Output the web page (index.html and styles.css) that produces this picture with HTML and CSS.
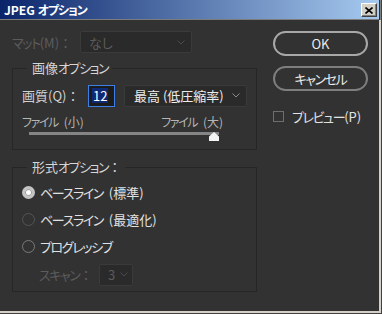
FILE: index.html
```html
<!DOCTYPE html>
<html lang="ja">
<head>
<meta charset="utf-8">
<title>JPEG オプション</title>
<link rel="stylesheet" href="styles.css">
</head>
<body>
<div class="window">
  <div class="titlebar">
    <span class="title">JPEG <span class="tk">オプション</span></span>
    <span class="close"><svg width="8" height="7" viewBox="0 0 8 7"><path d="M0.5 0.5L7.5 6.5M7.5 0.5L0.5 6.5" stroke="#000" stroke-width="1.6" fill="none"/></svg></span>
  </div>
  <div class="main">
    <div class="leftcol">
      <div class="matte-row">
        <span class="lbl disabled matte-lbl"><span class="k">マット</span>(M)<span class="colon">：</span></span>
        <div class="select matte-select disabled">
          <span>なし</span>
          <svg class="chev" width="8" height="5" viewBox="0 0 8 5"><path d="M0.5 0.5L4 4L7.5 0.5" stroke="#4a4a4a" fill="none"/></svg>
        </div>
      </div>
      <fieldset class="group g1">
        <legend>画像<span class="k">オプション</span></legend>
        <div class="quality-row">
          <span class="lbl q-lbl">画質(Q)<span class="colon">：</span></span>
          <div class="num-input"><span class="sel">12</span></div>
          <div class="select q-select">
            <span>最高 (低圧縮率)</span>
            <svg class="chev" width="8" height="5" viewBox="0 0 8 5"><path d="M0.5 0.5L4 4L7.5 0.5" stroke="#8a8a8a" fill="none"/></svg>
          </div>
        </div>
        <div class="size-row">
          <span><span class="k ks">ファイル</span> (小)</span>
          <span><span class="k ks">ファイル</span> (大)</span>
        </div>
        <div class="slider">
          <div class="track"></div>
          <svg class="thumb" width="10" height="9" viewBox="0 0 10 9"><path d="M5 0L10 4.5V9H0V4.5Z" fill="#f4f4f4"/></svg>
        </div>
      </fieldset>
      <fieldset class="group g2">
        <legend>形式<span class="k">オプション</span><span class="colon">：</span></legend>
        <div class="radio-row"><span class="radio on"></span><span><span class="k ks">ベースライン</span> (標準)</span></div>
        <div class="radio-row"><span class="radio dim"></span><span><span class="k ks">ベースライン</span> (最適化)</span></div>
        <div class="radio-row"><span class="radio"></span><span class="k">プログレッシブ</span></div>
        <div class="scan-row">
          <span class="disabled scan-lbl"><span class="k">スキャン</span><span class="colon">：</span></span>
          <div class="select scan-select disabled">
            <span>3</span>
            <svg class="chev" width="8" height="5" viewBox="0 0 8 5"><path d="M0.5 0.5L4 4L7.5 0.5" stroke="#4a4a4a" fill="none"/></svg>
          </div>
        </div>
      </fieldset>
    </div>
    <div class="rightcol">
      <button class="btn ok">OK</button>
      <button class="btn cancel"><span class="k">キャンセル</span></button>
      <label class="check-row"><span class="checkbox"></span><span><span class="k">プレビュー</span>(P)</span></label>
    </div>
  </div>
</div>
</body>
</html>
```

FILE: styles.css
```css
* { box-sizing: border-box; }
html, body { margin: 0; padding: 0; background: #323232; }
body {
  font-family: "Noto Sans CJK JP", "Noto Sans", sans-serif;
  font-size: 13px;
  font-feature-settings: "palt";
  color: #d2d2d2;
}
.k { letter-spacing: -1.4px; }
.ks { margin-right: 3px; }
.tk { letter-spacing: -1px; }
.colon { font-feature-settings: normal; }
.window {
  width: 382px;
  height: 314px;
  display: flex;
  flex-direction: column;
  background: #323232;
  border-right: 1px solid #404040;
  border-bottom: 1px solid #404040;
  box-shadow: inset -1px -1px 0 #808080;
}
.titlebar {
  height: 20px;
  flex: none;
  display: flex;
  align-items: center;
  justify-content: space-between;
  padding: 0 2px 0 4px;
  margin-right: 2px;
  background: linear-gradient(to right, #0a246a, #a6caf0);
  border-bottom: 1px solid #7c7c7c;
}
.title {
  color: #fff;
  font-weight: bold;
  font-size: 12px;
  line-height: 19px;
}
.close {
  width: 16px;
  height: 14px;
  margin-top: 1px;
  display: flex;
  align-items: center;
  justify-content: center;
  background: #d4d0c8;
  border-top: 1px solid #fff;
  border-left: 1px solid #fff;
  border-right: 1px solid #404040;
  border-bottom: 1px solid #404040;
  box-shadow: inset -1px -1px 0 #808080;
}
.main {
  flex: 1;
  display: flex;
  padding-left: 12px;
  border-right: 2px solid #d4d0c8;
  border-bottom: 2px solid #d4d0c8;
}
.leftcol {
  width: 245px;
  display: flex;
  flex-direction: column;
}
.disabled { color: #5c5c5c; }
.matte-row {
  margin-top: 11px;
  height: 22px;
  display: flex;
  align-items: center;
}
.matte-lbl { width: 68px; white-space: nowrap; }
.select {
  display: flex;
  align-items: center;
  justify-content: space-between;
  background: #2a2a2a;
  border: 1px solid #3a3a3a;
  border-radius: 2px;
  height: 22px;
  padding: 0 6px 0 8px;
  white-space: nowrap;
}
.matte-select { width: 112px; }
.chev { flex: none; }
.group {
  margin: 0;
  border: 1px solid #262626;
  padding: 0;
  min-width: 0;
}
.group legend {
  margin-left: 5px;
  padding: 0 4px 0 5px;
  line-height: 16px;
  color: #d6d6d6;
  white-space: nowrap;
}
.g1 { margin-top: 7px; height: 90px; padding: 8px 0 0 9px; }
.quality-row {
  display: flex;
  align-items: center;
  height: 23px;
}
.q-lbl { width: 66px; white-space: nowrap; }
.num-input {
  width: 27px;
  height: 22px;
  border: 1px solid #3c7fe6;
  background: #1c1c1c;
  display: flex;
  align-items: center;
  padding-left: 3px;
}
.sel {
  background: #0f2a74;
  color: #fff;
  line-height: 15px;
  padding: 0 1px;
}
.q-select {
  margin-left: 9px;
  width: 123px;
  color: #ececec;
  padding-left: 9px;
}
.size-row {
  margin-top: 8px;
  width: 201px;
  display: flex;
  justify-content: space-between;
  font-size: 12px;
  line-height: 14px;
  color: #b4b4b4;
  white-space: nowrap;
}
.slider {
  position: relative;
  margin: 3px 0 0 7px;
  width: 190px;
  height: 10px;
}
.track {
  margin-top: 3px;
  height: 3px;
  background: #858585;
}
.thumb {
  position: absolute;
  left: 180px;
  top: 0;
}
.g2 { margin-top: 9px; height: 133px; padding: 4px 0 0 9px; }
.radio-row {
  display: flex;
  align-items: center;
  height: 27px;
  gap: 5px;
  color: #e2e2e2;
  white-space: nowrap;
}
.radio {
  width: 13px;
  height: 13px;
  border-radius: 50%;
  border: 1px solid #7a7a7a;
  flex: none;
}
.radio.dim { border-color: #555; }
.radio.on {
  border: 3px solid #c4c4c4;
  background: #fff;
  box-shadow: inset 0 0 0 1px #9a9a9a;
}
.scan-row {
  margin-top: 3px;
  margin-left: 17px;
  display: flex;
  align-items: center;
  height: 23px;
}
.scan-lbl { width: 60px; white-space: nowrap; }
.scan-select { width: 34px; padding: 0 4px 0 8px; }
.rightcol {
  margin-left: 16px;
  width: 100px;
  display: flex;
  flex-direction: column;
}
.btn {
  font-family: inherit;
  font-feature-settings: "palt";
  width: 95px;
  height: 25px;
  border-radius: 13px;
  background: transparent;
  color: #ececec;
  padding: 0;
  font-size: 13px;
}
.ok { margin-top: 11px; border: 2px solid #a8a8a8; }
.cancel { margin-top: 10px; border: 2px solid #7e7e7e; }
.check-row {
  margin-top: 19px;
  display: flex;
  align-items: center;
  gap: 8px;
  height: 13px;
  color: #e2e2e2;
  white-space: nowrap;
}
.checkbox {
  width: 11px;
  height: 11px;
  border: 1px solid #6e6e6e;
  flex: none;
}
```
